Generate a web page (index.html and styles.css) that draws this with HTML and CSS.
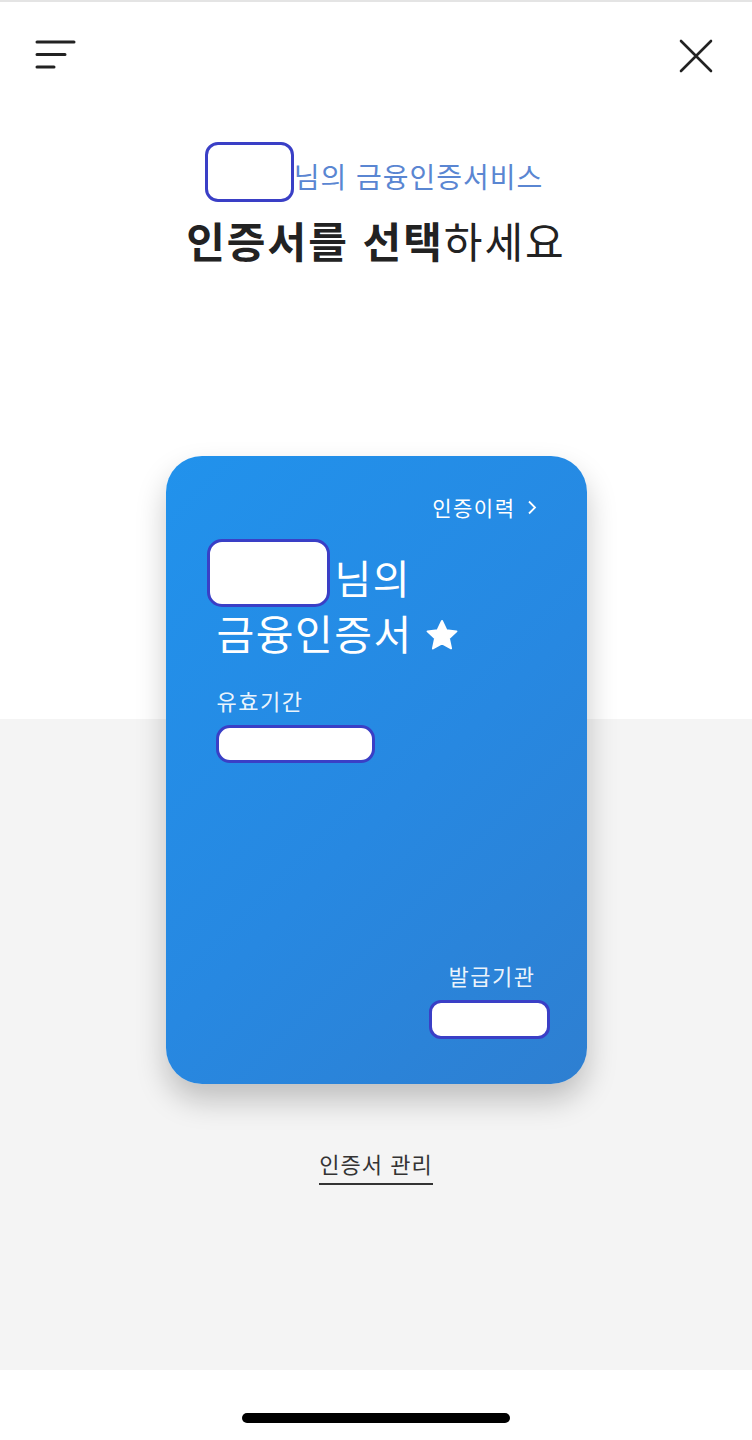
FILE: index.html
```html
<!DOCTYPE html>
<html lang="ko">

<head>
    <meta charset="UTF-8">
    <meta name="viewport" content="width=device-width, initial-scale=1.0">
    <title>금융인증서비스</title>
    <link rel="stylesheet" href="styles.css">
</head>

<body>
    <div id="screen">
        <div class="top">
            <svg class="menu" width="42" height="32" viewBox="0 0 42 32">
                <path d="M2 3H39M2 15.5H30M2 28H19" stroke="#222" stroke-width="3" stroke-linecap="round" fill="none" />
            </svg>
            <svg class="close" width="36" height="36" viewBox="0 0 36 36">
                <path d="M3 3L33 33M33 3L3 33" stroke="#222" stroke-width="2.6" stroke-linecap="round" fill="none" />
            </svg>
        </div>

        <div class="intro">
            <p class="sub"><span class="mask mask_sub"></span>님의 금융인증서비스</p>
            <h1 class="title"><b>인증서를 선택</b>하세요</h1>
        </div>

        <div class="stage">
            <div class="card">
                <p class="history">인증이력
                    <svg class="arrow" width="10" height="15" viewBox="0 0 10 15">
                        <path d="M2 1.5L8 7.5L2 13.5" stroke="#fff" stroke-width="1.8" fill="none" />
                    </svg>
                </p>
                <div class="owner">
                    <span class="mask mask_name"></span>
                    <span>님의</span>
                </div>
                <div class="cert">
                    금융인증서
                    <svg class="star" width="34" height="33" viewBox="0 0 24 23">
                        <path d="M12 1.2l3.1 6.6 7.1.8-5.3 4.9 1.5 7.1L12 17l-6.4 3.6 1.5-7.1L1.8 8.6l7.1-.8z" fill="#fff" stroke="#fff" stroke-width="1.4" stroke-linejoin="round" />
                    </svg>
                </div>
                <p class="label">유효기간</p>
                <span class="mask mask_date"></span>
                <div class="fill"></div>
                <div class="issuer">
                    <p class="label">발급기관</p>
                    <span class="mask mask_org"></span>
                </div>
            </div>
            <a class="manage" href="#">인증서 관리</a>
        </div>

        <div class="bottom">
            <span class="home"></span>
        </div>
    </div>
</body>

</html>
```

FILE: styles.css
```css
* {
    margin: 0;
    padding: 0;
    box-sizing: border-box;
}

body {
    background: #fff;
    font-family: "Noto Sans CJK KR", "Noto Sans", sans-serif;
    color: #222;
}

#screen {
    width: 752px;
    height: 1440px;
    border-top: 2px solid #e4e4e4;
    display: flex;
    flex-direction: column;
}

.top {
    height: 108px;
    display: flex;
    justify-content: space-between;
    align-items: flex-start;
    padding: 0 38px 0 35px;
}

.top .menu {
    margin-top: 37px;
}

.top .close {
    margin-top: 36px;
}

.intro {
    text-align: center;
    padding-bottom: 22px;
}

.sub {
    display: flex;
    justify-content: center;
    align-items: center;
    height: 60px;
    margin-top: 36px;
    font-size: 28px;
    color: #5a86d2;
    letter-spacing: 1px;
    padding-right: 4px;
}

.title {
    margin-top: 6px;
    font-size: 42px;
    line-height: 56px;
    font-weight: 400;
    color: #222;
    letter-spacing: 2px;
}

.title b {
    font-weight: 700;
}

/* masked fields */
.mask {
    display: inline-block;
    background: #fff;
    border: 3px solid #3a3fc6;
    border-radius: 13px;
}

.mask_sub {
    width: 89px;
    height: 60px;
    margin-top: -8px;
}

.stage {
    height: 1080px;
    background: linear-gradient(#fff 0, #fff 429px, #f4f4f4 429px);
    display: flex;
    flex-direction: column;
    align-items: center;
}

.card {
    width: 421px;
    height: 628px;
    margin-top: 166px;
    padding: 36px 50px 45px 51px;
    border-radius: 36px;
    background: linear-gradient(135deg, #2192ec 0%, #2788e1 55%, #2e7fd1 100%);
    box-shadow: 0 16px 30px rgba(0, 0, 0, 0.22);
    color: #fff;
    display: flex;
    flex-direction: column;
    align-items: flex-start;
}

.history {
    align-self: flex-end;
    display: flex;
    align-items: center;
    font-size: 21px;
    line-height: 30px;
    letter-spacing: 1.5px;
}

.history .arrow {
    margin-left: 11px;
}

.owner {
    display: flex;
    align-items: center;
    margin: 17px 0 0 -10px;
    font-size: 40px;
    line-height: 50px;
    letter-spacing: 1.5px;
}

.owner span:last-child {
    margin: 8px 0 0 5px;
}

.mask_name {
    width: 123px;
    height: 68px;
    border-radius: 15px;
}

.cert {
    display: flex;
    align-items: center;
    font-size: 41px;
    line-height: 50px;
    letter-spacing: 1.5px;
}

.cert .star {
    margin: 6px 0 0 12px;
}

.label {
    font-size: 22px;
    line-height: 30px;
    letter-spacing: 1.5px;
    color: rgba(255, 255, 255, 0.93);
}

.card > .label {
    margin-top: 28px;
}

.mask_date {
    width: 159px;
    height: 38px;
    margin: 10px 0 0 -1px;
    border-radius: 14px;
}

.fill {
    flex: 1;
}

.issuer {
    align-self: flex-end;
    display: flex;
    flex-direction: column;
    align-items: center;
    margin-right: -13px;
}

.issuer .label {
    margin-left: 6px;
}

.mask_org {
    width: 121px;
    height: 39px;
    margin-top: 10px;
    border-radius: 12px;
}

.manage {
    margin-top: 64px;
    font-size: 22px;
    line-height: 30px;
    color: #333;
    text-decoration: none;
    padding-bottom: 5px;
    border-bottom: 2px solid #333;
    letter-spacing: 1px;
}

.bottom {
    flex: 1;
    display: flex;
    justify-content: center;
}

.home {
    width: 268px;
    height: 10px;
    margin-top: 43px;
    background: #000;
    border-radius: 5px;
}
```
